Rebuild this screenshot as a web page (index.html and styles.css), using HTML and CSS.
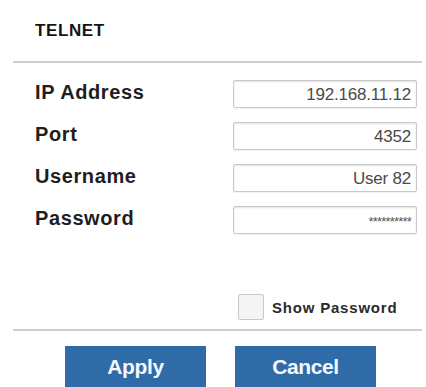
FILE: index.html
```html
<!DOCTYPE html>
<html>
<head>
<meta charset="utf-8">
<link rel="stylesheet" href="styles.css">
</head>
<body>
<div class="panel">
  <div class="header"><span class="title">TELNET</span></div>
  <div class="divider"></div>
  <div class="form">
    <div class="row">
      <span class="label">IP Address</span>
      <div class="field">192.168.11.12</div>
    </div>
    <div class="row">
      <span class="label">Port</span>
      <div class="field">4352</div>
    </div>
    <div class="row">
      <span class="label">Username</span>
      <div class="field">User 82</div>
    </div>
    <div class="row">
      <span class="label">Password</span>
      <div class="field field-pass">**********</div>
    </div>
  </div>
  <div class="show-row">
    <span class="checkbox"></span>
    <span class="show-label">Show Password</span>
  </div>
  <div class="divider"></div>
  <div class="buttons">
    <div class="btn">Apply</div>
    <div class="btn">Cancel</div>
  </div>
</div>
</body>
</html>
```
FILE: styles.css
```css
html, body {
  margin: 0;
  padding: 0;
  background: #ffffff;
}
body {
  font-family: "Liberation Sans", Arial, sans-serif;
  color: #222;
}
.panel {
  width: 426px;
  height: 387px;
  overflow: hidden;
}
.header {
  height: 61px;
  display: flex;
  align-items: center;
  padding-left: 35px;
}
.title {
  font-size: 17px;
  font-weight: bold;
  letter-spacing: 0.6px;
  color: #141414;
}
.divider {
  height: 2px;
  background: #cfcfcf;
  margin: 0 4px 0 13px;
}
.form {
  display: flex;
  flex-direction: column;
  gap: 14px;
  padding: 17px 0 0 35px;
}
.row {
  display: flex;
  align-items: center;
  height: 28px;
}
.label {
  width: 198px;
  font-size: 20px;
  font-weight: bold;
  letter-spacing: 0.6px;
  color: #1e1e1e;
  margin-top: -4px;
}
.field {
  border: 1px solid #c9c9c9;
  border-radius: 2px;
  box-shadow: inset 0 1px 2px rgba(0,0,0,0.12), 0 1px 1px rgba(0,0,0,0.06);
  text-align: right;
  padding-right: 5px;
  font-size: 17px;
  letter-spacing: -0.2px;
  line-height: 27px;
  color: #4a4a4a;
  box-sizing: border-box;
  width: 184px;
  height: 28px;
}
.field-pass {
  font-size: 13px;
  letter-spacing: -0.8px;
  color: #555;
  line-height: 30px;
}
.show-row {
  display: flex;
  align-items: center;
  padding: 60px 0 0 238px;
  height: 26px;
  margin-bottom: 9px;
}
.checkbox {
  width: 24px;
  height: 24px;
  border: 1px solid #c8c8c8;
  border-radius: 2px;
  background: #f4f4f4;
  margin-right: 8px;
}
.show-label {
  font-size: 15px;
  font-weight: bold;
  letter-spacing: 0.8px;
  color: #2a2a2a;
}
.buttons {
  display: flex;
  gap: 29px;
  padding: 15px 0 0 65px;
}
.btn {
  width: 141px;
  height: 46px;
  background: #2f6ba6;
  color: #f4f8ff;
  font-size: 21px;
  font-weight: bold;
  letter-spacing: -0.4px;
  display: flex;
  align-items: center;
  justify-content: center;
  padding-bottom: 4px;
  box-sizing: border-box;
}
```
